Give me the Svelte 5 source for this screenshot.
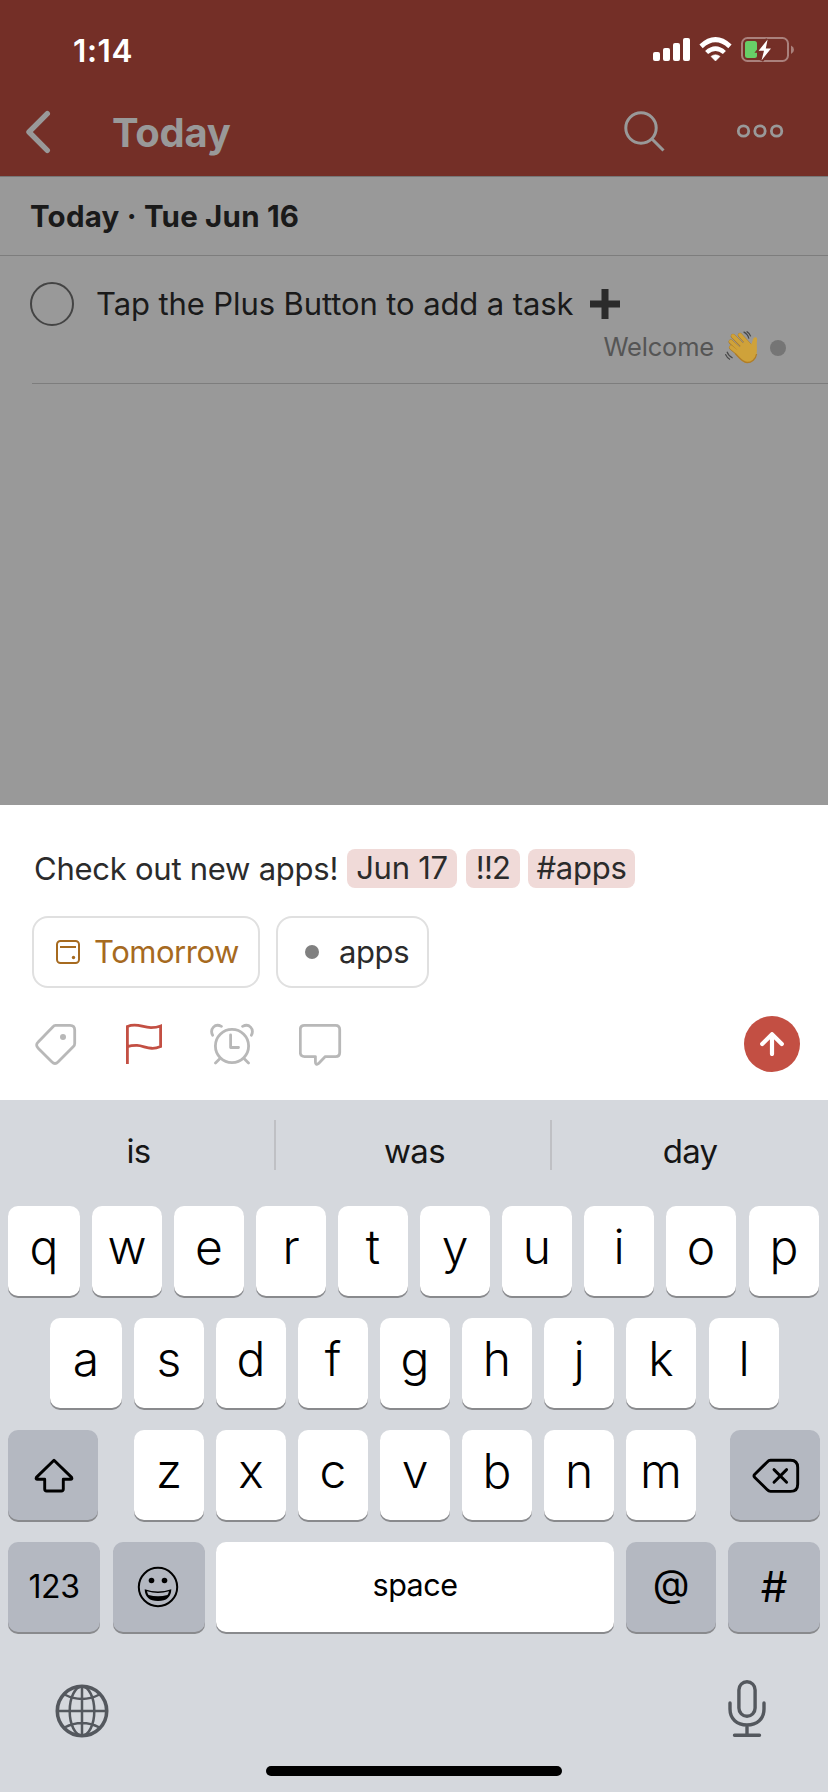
<script>
  const chips = ['Jun 17', '!!2', '#apps'];
  const suggestions = ['is', 'was', 'day'];
  const rowTop = [...'qwertyuiop'];
  const rowHome = [...'asdfghjkl'];
  const rowBottom = [...'zxcvbnm'];
</script>

<main class="phone">
  <header class="top">
    <div class="status">
      <span class="time">1:14</span>
      <svg class="status-icons" width="142" height="28" viewBox="652 36 142 28">
        <g fill="#fff">
          <rect x="653" y="52" width="7" height="9" rx="2" />
          <rect x="663" y="48" width="7" height="13" rx="2" />
          <rect x="673" y="43" width="7" height="18" rx="2" />
          <rect x="683" y="38" width="7" height="23" rx="2" />
          <path d="M715.5 61 L711 56.4 Q715.5 53.2 720 56.4 Z" stroke="#fff" stroke-width=".6" />
          <path d="M725.9 50.9 L722.9 54 Q715.5 48.2 708.1 54 L705.1 50.9 Q715.5 41.7 725.9 50.9Z" />
          <path d="M731.6 44.5 L728.3 48.2 Q715.5 36.5 702.7 48.2 L699.4 44.5 Q715.5 29.6 731.6 44.5Z" />
        </g>
        <rect x="742" y="38" width="46" height="23" rx="5.5" fill="none" stroke="#aa817c" stroke-width="2" />
        <path d="M791 45.5 Q794 47 794 49.7 T791 54Z" fill="#aa817c" />
        <rect x="745" y="41" width="12" height="17" rx="2.5" fill="#68ce67" />
        <path d="M767.6 39.5 L758.6 50.8 L764 50.8 L761.5 60.5 L771 48.5 L765.8 48.5 Z" fill="#fff" stroke="#742f27" stroke-width="4" paint-order="stroke" />
      </svg>
    </div>
    <nav class="bar">
      <svg class="back" width="28" height="44" viewBox="0 0 28 44"><path d="M23.3 3.7 L5 22 L23.3 40.3" /></svg>
      <h1>Today</h1>
      <svg class="search" width="42" height="42" viewBox="0 0 42 42"><circle cx="17" cy="17" r="15.2" /><path d="M28 28 L39.5 39.5" /></svg>
      <svg class="more" width="48" height="14" viewBox="0 0 48 14"><circle cx="7.5" cy="7" r="5.2" /><circle cx="24" cy="7" r="5.2" /><circle cx="40.6" cy="7" r="5.2" /></svg>
    </nav>
  </header>

  <section class="list">
    <h2>Today · Tue Jun 16</h2>
    <article class="task">
      <div class="task-line">
        <span class="check"></span>
        <span class="task-title">Tap the Plus Button to add a task</span>
        <svg class="plus" width="30" height="30" viewBox="0 0 30 30"><path d="M11.5 0H18.5V11.5H30V18.5H18.5V30H11.5V18.5H0V11.5H11.5Z" fill="#2b2b2b" /></svg>
      </div>
      <div class="project">
        <span class="project-name">Welcome</span>
        <svg class="wave" width="34" height="34" viewBox="0 0 34 34">
          <path d="M6.2 16.6 L15 24 M5.8 10.8 L17 21 M8 5.2 L20 17 M15 4.2 L25 15" fill="none" stroke="#a97823" stroke-width="4.6" stroke-linecap="round" />
          <path d="M6.2 16.3 L15 23.7 M5.8 10.5 L17 20.7 M8 4.9 L20 16.7 M15 3.9 L25 14.7" fill="none" stroke="#cfa23a" stroke-width="3.7" stroke-linecap="round" />
          <path d="M12 19 L20.5 9.6 L26 13.8 C27.4 11.4 27.4 9 28.6 7.2 C29.9 5.6 32.4 6.4 32.1 8.6 C31.3 13 32.4 18 31.6 23 C30.8 28 26.6 31.8 22 31.7 C17.5 31.4 15 27.6 12.4 24.4 Z" fill="#cfa23a" />
          <path d="M31.6 23 C30.8 28 26.6 31.6 22 31.5 C17.5 31.2 15 27.6 10.4 22.6" fill="none" stroke="#b07d27" stroke-width="1.3" />
          <path d="M18.6 .9 Q22.8 3 23.9 7.6 M21.6 .4 Q24.6 2 25.7 5.4 M2 20.8 Q3.4 25 7.6 27 M.4 23.2 Q1.8 26.6 5 28.4" fill="none" stroke="#484848" stroke-width="1.2" />
        </svg>
        <span class="project-dot"></span>
      </div>
    </article>
  </section>

  <section class="composer">
    <div class="entry">
      <span class="entry-text">Check out new apps!</span>
      {#each chips as chip, i}
        <mark class="chip c{i}">{chip}</mark>
      {/each}
    </div>
    <div class="options">
      <button class="option due">
        <svg width="24" height="24" viewBox="0 0 24 24"><rect x="1" y="1" width="22" height="22" rx="3.5" fill="none" stroke="#a66a1f" stroke-width="2" /><path d="M4 7H20" stroke="#a66a1f" stroke-width="2" /><circle cx="17.5" cy="17.5" r="1.7" fill="#a66a1f" /></svg>
        <span>Tomorrow</span>
      </button>
      <button class="option label"><i></i><span>apps</span></button>
    </div>
    <div class="tools">
      <svg width="44" height="44" viewBox="34 1022 44 44"><path d="M55.5 1025.3H70 Q74.7 1025.3 74.7 1030V1043.5 Q74.7 1045.3 73.4 1046.6L58 1062 Q55 1065 52 1062L38.2 1048.2 Q35 1045 38.2 1042L53 1026.8 Q54 1025.3 55.5 1025.3Z" /><circle class="solid" cx="63" cy="1037" r="3" /></svg>
      <svg class="flag" width="44" height="44" viewBox="124 1022 44 44"><path d="M127.4 1064V1026.5 C137 1022.5 142 1027.6 151 1027.6 Q156.5 1027.6 160.6 1026V1046.5 C150 1051 144.5 1045.6 137 1045.4 Q131.5 1045.3 127.4 1046.6" /></svg>
      <svg width="46" height="44" viewBox="209 1022 46 44"><circle cx="232" cy="1046" r="16.6" /><path d="M230.6 1035V1047.5H238.5 M219.5 1059L215.5 1063 M244.5 1059L248.5 1063 M212.6 1035.2 C209.5 1029 215 1022.8 221.4 1026.4 M251.4 1035.2 C254.5 1029 249 1022.8 242.6 1026.4" /></svg>
      <svg width="44" height="44" viewBox="299 1022 44 44"><path d="M304.5 1025.3H335.5 Q339.7 1025.3 339.7 1029.5V1052.5 Q339.7 1056.6 335.5 1056.6H325.3L318.6 1063.4 Q315.4 1065.8 315.4 1062V1056.6H304.5 Q300.3 1056.6 300.3 1052.5V1029.5 Q300.3 1025.3 304.5 1025.3Z" /></svg>
      <button class="send" aria-label="Add task"><svg width="24" height="24" viewBox="0 0 24 24"><path d="M12 22V3 M2.2 12L12 2.2L21.8 12" /></svg></button>
    </div>
  </section>

  <section class="keyboard">
    <div class="suggestions">
      {#each suggestions as word}<span>{word}</span>{/each}
    </div>
    <div class="keys">
      <div class="row">
        {#each rowTop as k}<kbd class="key">{k}</kbd>{/each}
      </div>
      <div class="row home">
        {#each rowHome as k}<kbd class="key">{k}</kbd>{/each}
      </div>
      <div class="row bottom">
        <kbd class="key mod shift"><svg width="40" height="36" viewBox="0 0 40 36"><path d="M20 2.2 L37.6 19.4 Q38.6 21.3 36.5 21.3H29.3V31 Q29.3 33 27.3 33H12.7 Q10.7 33 10.7 31V21.3H3.5 Q1.4 21.3 2.4 19.4Z" /></svg></kbd>
        <div class="letters">
          {#each rowBottom as k}<kbd class="key">{k}</kbd>{/each}
        </div>
        <kbd class="key mod erase"><svg width="48" height="36" viewBox="0 0 48 36"><path d="M18.5 2.3H38.5 Q45.7 2.3 45.7 9.5V26.2 Q45.7 33.4 38.5 33.4H18.5 Q16.8 33.4 15 31.5L2.8 19.5 Q1.2 17.9 2.8 16.2L15 4.2 Q16.8 2.3 18.5 2.3Z" /><path d="M22 11.6L34.6 24.2M34.6 11.6L22 24.2" /></svg></kbd>
      </div>
      <div class="row space-row">
        <kbd class="key mod digits">123</kbd>
        <kbd class="key mod emoji">
          <svg width="42" height="42" viewBox="0 0 42 42"><circle cx="21" cy="21" r="19.2" fill="none" stroke="#000" stroke-width="2" /><circle cx="14.5" cy="14.5" r="2.8" /><circle cx="27.5" cy="14.5" r="2.8" /><path d="M7.7 23.2 Q21 27.8 34.3 23.2 Q34 35 21 35 Q8 35 7.7 23.2Z" /><path d="M10 25.3 Q21 28.8 32 25.3 Q31.6 27.4 30.5 29 Q21 31.5 11.5 29 Q10.4 27.3 10 25.3Z" fill="#b4b8c1" /></svg>
        </kbd>
        <kbd class="key space">space</kbd>
        <kbd class="key mod at">@</kbd>
        <kbd class="key mod hash">#</kbd>
      </div>
    </div>
    <div class="dock">
      <svg width="54" height="54" viewBox="-27 -27 54 54" fill="none" stroke="#54585e" stroke-width="2.5"><circle r="24.7" stroke-width="3.6" /><path d="M0-25V25M-25 0H25M-17.5-16.5Q0-7.5 17.5-16.5M-17.5 16.5Q0 7.5 17.5 16.5" /><ellipse rx="12.3" ry="24.5" /></svg>
      <svg width="38" height="58" viewBox="0 0 38 58" fill="none" stroke="#54585e" stroke-width="3.4" stroke-linecap="round"><rect x="10.9" y="1.8" width="16.2" height="34.4" rx="8.1" /><path d="M2 23V29C2 39 9 45 19 45S36 39 36 29V23M19 45V55M6.5 55.3H31.5" /></svg>
    </div>
    <div class="home-bar"></div>
  </section>
</main>

<style>
  :global(body) { margin: 0; }
  .phone { width: 828px; height: 1792px; display: flex; flex-direction: column; background: #999; font-family: Inter, "Liberation Sans", sans-serif; overflow: hidden; }
  .phone, .phone * { box-sizing: border-box; }
  svg { display: block; flex: none; }
  span, h1, h2, kbd { white-space: nowrap; }

  .top { height: 177px; background: #742f27; border-bottom: 1px solid #777; }
  .status { height: 88px; padding: 12px 34px 0 73px; display: flex; justify-content: space-between; align-items: center; }
  .time { font-size: 31.5px; font-weight: 600; letter-spacing: .6px; color: #fff; }
  .status-icons { align-self: flex-start; margin-top: 24px; }
  .bar { height: 88px; display: flex; align-items: center; padding-left: 24px; }
  .back { fill: none; stroke: #999; stroke-width: 5.4; stroke-linecap: round; stroke-linejoin: round; }
  h1 { margin: 0; padding-left: 60px; width: 572px; font-size: 40px; line-height: 89px; font-weight: 700; letter-spacing: -.3px; color: #999; }
  .search { fill: none; stroke: #999; stroke-width: 3; margin-top: -1px; }
  .more { margin-left: 70px; margin-top: -2px; fill: none; stroke: #999; stroke-width: 2.8; }

  .list { height: 628px; }
  h2 { margin: 0; height: 79px; padding-left: 30px; border-bottom: 1px solid #7d7d7d; font-size: 29.5px; line-height: 79px; font-weight: 700; letter-spacing: .2px; color: #1a1a1a; }
  .task { margin-left: 32px; height: 128px; border-bottom: 1px solid #7d7d7d; padding-top: 26px; }
  .task-line { height: 44px; margin-left: -2px; display: flex; align-items: center; }
  .check { width: 44px; height: 44px; border: 2px solid #444; border-radius: 50%; }
  .task-title { margin-left: 22px; width: 494px; font-size: 31px; line-height: 44px; letter-spacing: -.1px; color: #1a1a1a; }
  .project { height: 44px; display: flex; align-items: center; justify-content: flex-end; padding-right: 42px; }
  .project-name { font-size: 25.5px; line-height: 42px; margin-bottom: 2px; letter-spacing: -.2px; color: #555; }
  .wave { margin-left: 11px; }
  .project-dot { width: 16px; height: 16px; border-radius: 50%; background: #757575; margin-left: 11px; }

  .composer { height: 295px; background: #fff; padding: 44px 28px 0 32px; }
  .entry { height: 39px; display: flex; font-size: 31px; line-height: 40px; color: #2b2b2b; letter-spacing: -.25px; }
  .entry-text { width: 315px; padding-left: 2px; }
  .chip { background: #f0dad8; color: #2b2b2b; border-radius: 8px; height: 39px; line-height: 38px; text-align: center; white-space: nowrap; }
  .c0 { width: 110px; }
  .c1 { width: 54px; margin-left: 9px; letter-spacing: -.8px; }
  .c2 { width: 107px; margin-left: 8px; }
  .options { margin-top: 28px; display: flex; gap: 16px; }
  .option { height: 72px; border: 2px solid #e0e0e0; border-radius: 16px; background: #fff; padding: 0; display: flex; align-items: center; font: 31px/68px Inter, sans-serif; color: #2b2b2b; }
  .due { width: 228px; padding-left: 22px; color: #a66a1f; }
  .due span { margin-left: 14px; letter-spacing: -.45px; }
  .label { width: 153px; padding-left: 27px; }
  .label i { width: 14px; height: 14px; border-radius: 50%; background: #808080; }
  .label span { margin-left: 20px; letter-spacing: -.4px; }
  .tools { height: 56px; margin-top: 28px; padding-left: 2px; display: flex; align-items: center; }
  .tools > svg { fill: none; stroke: #b8b8b8; stroke-width: 2.8; stroke-linejoin: round; stroke-linecap: round; }
  .tools > svg + svg { margin-left: 44px; }
  .tools > svg.flag { margin-left: 46px; margin-right: -3px; stroke: #c34f43; stroke-linecap: butt; stroke-linejoin: miter; }
  .tools .solid { fill: #b8b8b8; stroke: none; }
  .send { margin-left: auto; width: 56px; height: 56px; border: 0; padding: 0; border-radius: 50%; background: #c34f43; display: grid; place-items: center; }
  .send svg { fill: none; stroke: #fff; stroke-width: 4.2; stroke-linecap: round; stroke-linejoin: round; }

  .keyboard { height: 692px; background: #d5d8dd; display: flex; flex-direction: column; align-items: stretch; }
  .suggestions { height: 106px; padding-top: 20px; display: flex; }
  .suggestions span { width: 276px; height: 50px; padding-left: 3px; border-right: 2px solid #bfc0c4; text-align: center; font-size: 33px; line-height: 62px; letter-spacing: -.7px; color: #161616; }
  .suggestions span:last-child { border-right: 0; padding-left: 0; }
  .keys { display: flex; flex-direction: column; gap: 22px; padding: 0 8px; }
  .row { height: 90px; display: flex; gap: 12px; }
  .home { padding: 0 42px; }
  .key { display: flex; flex: none; justify-content: center; align-items: center; width: 70px; height: 90px; border-radius: 10px; background: #fff; box-shadow: 0 2px 0 #898a8d; font: 300 48px/82px Inter, sans-serif; color: #000; padding-bottom: 8px; }
  .row:not(.bottom):not(.space-row) .key:first-child { width: 72px; }
  .row:not(.bottom):not(.space-row) .key:last-child { margin-left: 1px; }
  .key.mod { background: #b4b8c1; padding-bottom: 0; }
  .bottom { justify-content: space-between; }
  .key.shift, .key.erase { width: 90px; padding-left: 2px; }
  .shift svg, .erase svg { fill: none; stroke: #000; stroke-width: 2.9; stroke-linecap: round; stroke-linejoin: round; margin-top: 1px; }
  .letters { display: flex; gap: 12px; margin-left: 2px; }
  .key.digits { width: 92px; font-size: 32px; font-weight: 400; letter-spacing: -.5px; }
  .key.emoji { width: 92px; margin-left: 1px; padding-right: 2px; }
  .key.space { width: 398px; margin-left: -1px; font-size: 30.5px; font-weight: 400; letter-spacing: -.5px; padding-bottom: 5px; }
  .key.at { width: 90px; font-size: 38px; font-weight: 400; padding-bottom: 8px; }
  .key.hash { width: 92px; font-size: 42px; font-weight: 400; }
  .dock { height: 58px; margin-top: 48px; padding: 0 62px 0 55px; display: flex; justify-content: space-between; align-items: flex-end; }
  .home-bar { width: 296px; height: 10px; border-radius: 5px; background: #000; margin: 28px auto 0; }
</style>
